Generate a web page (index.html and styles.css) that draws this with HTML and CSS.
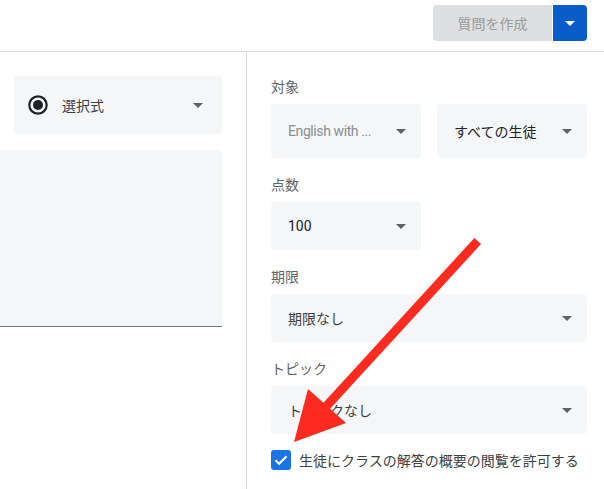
FILE: index.html
```html
<!DOCTYPE html>
<html lang="ja">
<head>
<meta charset="utf-8">
<link rel="stylesheet" href="styles.css">
</head>
<body>
<header class="topbar">
  <div class="split-btn">
    <button class="btn-main">質問を作成</button>
    <button class="btn-drop"><span class="tri tri-white"></span></button>
  </div>
</header>
<main class="layout">
  <section class="left">
    <div class="type-select">
      <svg class="radio" width="24" height="24" viewBox="0 0 24 24"><circle cx="12" cy="12" r="8.7" fill="none" stroke="#202124" stroke-width="2.2"/><circle cx="12" cy="12" r="5" fill="#202124"/></svg>
      <span class="type-label">選択式</span>
      <span class="tri"></span>
    </div>
    <div class="answer-area"></div>
  </section>
  <aside class="right">
    <div class="field">
      <div class="label">対象</div>
      <div class="row">
        <div class="select tall half"><span class="val muted">English with ...</span><span class="tri"></span></div>
        <div class="select tall half"><span class="val strong">すべての生徒</span><span class="tri"></span></div>
      </div>
    </div>
    <div class="field">
      <div class="label">点数</div>
      <div class="select half square-bottom"><span class="val strong">100</span><span class="tri"></span></div>
    </div>
    <div class="field">
      <div class="label">期限</div>
      <div class="select"><span class="val">期限なし</span><span class="tri"></span></div>
    </div>
    <div class="field">
      <div class="label">トピック</div>
      <div class="select"><span class="val">トピックなし</span><span class="tri"></span></div>
    </div>
    <label class="check-row">
      <span class="checkbox"><svg width="20" height="20" viewBox="0 0 20 20"><path d="M4.5 10.2 L8.2 13.8 L15.5 6.3" fill="none" stroke="#fff" stroke-width="2.2"/></svg></span>
      <span class="check-text">生徒にクラスの解答の概要の閲覧を許可する</span>
    </label>
  </aside>
</main>
<svg class="annotation" width="604" height="489" viewBox="0 0 604 489">
  <line x1="477.7" y1="241" x2="322" y2="411" stroke="#fd2a1f" stroke-width="9"/>
  <polygon points="294,442 308,389 346,423" fill="#fd2a1f"/>
</svg>
</body>
</html>
```

FILE: styles.css
```css
* { box-sizing: border-box; }
html, body { margin: 0; padding: 0; background: #fff; }
body {
  width: 604px;
  height: 489px;
  overflow: hidden;
  position: relative;
  font-family: Roboto, "Noto Sans CJK JP", sans-serif;
  font-size: 14px;
  color: #3c4043;
}
.topbar {
  height: 52px;
  border-bottom: 1px solid #dadce0;
  display: flex;
  justify-content: flex-end;
  align-items: flex-start;
  padding: 5px 17px 0 0;
}
.split-btn { display: flex; gap: 1px; height: 36px; }
.btn-main {
  border: none;
  margin: 0;
  width: 119px;
  height: 36px;
  background: #dedfe0;
  color: #9a9b9c;
  font-family: "Noto Sans CJK JP", sans-serif;
  font-size: 14px;
  border-radius: 4px 0 0 4px;
  padding: 0;
}
.btn-drop {
  border: none;
  margin: 0;
  width: 34px;
  height: 36px;
  background: #0b5ccb;
  border-radius: 0 4px 4px 0;
  display: flex;
  align-items: center;
  justify-content: center;
  padding: 0;
}
.tri {
  width: 0;
  height: 0;
  border-left: 5px solid transparent;
  border-right: 5px solid transparent;
  border-top: 5px solid #5f6368;
  flex: none;
}
.tri-white { border-top-color: #fff; }
.layout { display: flex; height: 437px; }
.left {
  width: 247px;
  border-right: 1px solid #dadce0;
  padding-top: 24px;
}
.type-select {
  margin-left: 14px;
  width: 208px;
  height: 58px;
  background: #f5f6f8;
  border-radius: 4px;
  display: flex;
  align-items: center;
  padding: 0 19px 0 12px;
}
.radio { flex: none; }
.type-label {
  flex: 1;
  margin-left: 12px;
  font-family: "Noto Sans CJK JP", sans-serif;
  color: #3c4043;
}
.answer-area {
  margin-top: 16px;
  width: 222px;
  height: 177px;
  background: #f5f6f8;
  border-bottom: 1px solid #6f777b;
  border-top-right-radius: 4px;
}
.right {
  flex: 1;
  padding: 24px 17px 0 24px;
  display: flex;
  flex-direction: column;
}
.field { display: flex; flex-direction: column; gap: 8px; }
.field + .field { margin-top: 16px; }
.label {
  height: 20px;
  line-height: 20px;
  color: #5f6368;
  font-family: "Noto Sans CJK JP", sans-serif;
}
.row { display: flex; gap: 16px; }
.select {
  height: 48px;
  background: #f5f6f8;
  border-radius: 4px;
  display: flex;
  align-items: center;
  padding: 0 15px 0 17px;
  width: 316px;
}
.select.tall { height: 54px; }
.select.half { width: 150px; }
.square-bottom { border-radius: 4px 4px 0 0; }
.val {
  flex: 1;
  white-space: nowrap;
  overflow: hidden;
  font-family: Roboto, "Noto Sans CJK JP", sans-serif;
  color: #3c4043;
}
.val.muted {
  color: #8a8d91;
  font-family: Roboto, sans-serif;
  font-size: 14px;
  letter-spacing: -0.4px;
}
.val.strong { color: #202124; }
.check-row {
  margin-top: 16px;
  display: flex;
  align-items: center;
  height: 20px;
}
.checkbox {
  width: 20px;
  height: 20px;
  background: #1a73e8;
  border-radius: 3px;
  display: flex;
  flex: none;
}
.check-text {
  margin-left: 8px;
  color: #3c4043;
  font-family: "Noto Sans CJK JP", sans-serif;
  line-height: 20px;
}
.annotation {
  position: absolute;
  left: 0;
  top: 0;
  pointer-events: none;
}
```
